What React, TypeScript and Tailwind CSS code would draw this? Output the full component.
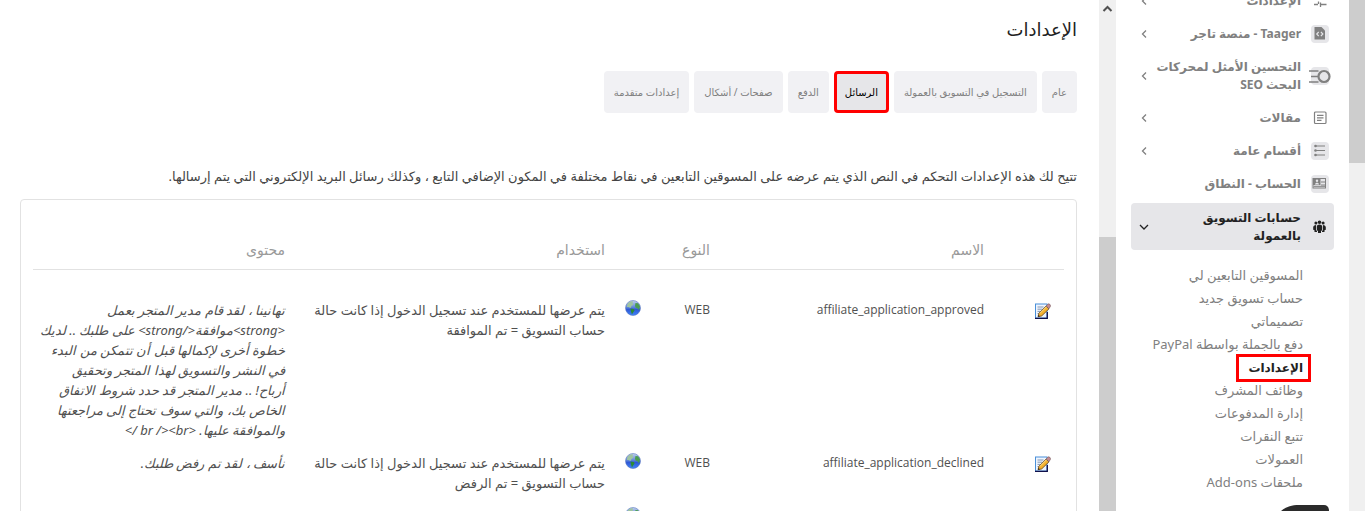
import type { ReactNode } from "react";
import clsx from "clsx";

type MenuItem = {
  lines: string[];
  icon: ReactNode;
  boxed?: boolean;
  expandable?: boolean;
  active?: boolean;
};

function SlidersIcon() {
  return (
    <svg viewBox="0 0 16 16" className="size-4" fill="none" stroke="currentColor" strokeWidth="1.3">
      <path d="M2 4h7M11 2v4M11 4h3M2 11.500h4M6.500 8.500v2.500M8.500 9.500v4.500M8.500 11.500h6" />
    </svg>
  );
}

function CodeFileIcon() {
  return (
    <svg viewBox="0 0 16 16" className="size-4">
      <path d="M2.500 1h7L13 4.500V13.500H2.500z" fill="currentColor" />
      <path d="M6.700 6 4.700 8l2 2M8.900 6l2 2-2 2" fill="none" stroke="#e6e6e9" strokeWidth="1.100" />
    </svg>
  );
}

function SeoIcon() {
  return (
    <svg viewBox="0 0 22 16" className="h-4 w-[22px] shrink-0" fill="none" stroke="currentColor">
      <circle cx="15" cy="8.500" r="5.500" strokeWidth="2.200" />
      <path d="M0 3h9.500M2 8.500h8M0 14h9.500" strokeWidth="1.500" />
    </svg>
  );
}

function ArticleIcon() {
  return (
    <svg viewBox="0 0 16 16" className="size-4" fill="none" stroke="currentColor" strokeWidth="1.200">
      <rect x="2.500" y="2" width="11.500" height="11.500" rx="1" />
      <path d="M5 5.300h6.500M5 7.800h6.500M5 10.300h4.500" />
    </svg>
  );
}

function ListIcon() {
  return (
    <svg viewBox="0 0 16 16" className="size-4" fill="currentColor">
      <circle cx="3.500" cy="3" r="1.300" />
      <circle cx="3.500" cy="7.500" r="1.300" />
      <circle cx="3.500" cy="12" r="1.300" />
      <path d="M4 2.500h9v1H4zM4 7h9v1H4zM4 11.500h9v1H4z" />
    </svg>
  );
}

function IdCardIcon() {
  return (
    <svg viewBox="0 0 16 16" className="size-4">
      <rect x="1" y="2.500" width="12.500" height="9.500" fill="none" stroke="currentColor" />
      <path d="M1 2.500h7.500v6.500H1z" fill="currentColor" />
      <circle cx="5" cy="4.800" r="1.200" fill="#e6e6e9" />
      <path d="M3 8.500c0-2.500 4-2.500 4 0z" fill="#e6e6e9" />
      <path d="M9 6h4.500M9 9h4.500M1.500 10.300h12" stroke="currentColor" />
    </svg>
  );
}

function GroupIcon() {
  return (
    <svg viewBox="0 0 16 16" className="size-4" fill="currentColor">
      <circle cx="7.500" cy="3.200" r="1.800" />
      <circle cx="3.900" cy="3.900" r="1.500" />
      <circle cx="11.100" cy="3.900" r="1.500" />
      <path d="M4.800 7.800C4.800 4.800 10.200 4.800 10.200 7.800V11.200L9 12V14H6V12L4.800 11.200z" />
      <path d="M4.100 5.900C2.300 5.900 1.200 7 1.200 8.200v2.500l1.300.6v1.700H5v-1.200l-1-.6zM10.900 5.900c1.800 0 2.900 1.100 2.900 2.300v2.500l-1.300.6v1.700H10v-1.200l1-.6z" />
    </svg>
  );
}

function EditIcon() {
  return (
    <svg viewBox="0 0 16 16" className="size-4">
      <rect x=".5" y="1" width="11.500" height="14" fill="#eef5ff" stroke="#4a90d9" />
      <path d="M0 15.300h12.300V9" fill="none" stroke="#10104a" strokeWidth="1.300" />
      <path d="M2.500 4h6M2.500 6.200h5M2.500 8.400h3M2.500 10.600h2" stroke="#8796ad" />
      <path d="m3 13.700 1-3.500L11.200 3l2.800 2.800-7.300 7.100z" fill="#f5b22e" stroke="#5c3b12" strokeWidth=".8" />
      <path d="M4.800 10.500 11.700 3.600" stroke="#ffe08a" />
      <path d="m11.200 3 1.800-2c1-.8 3 1 2.400 2.200L14 5.800z" fill="#c78c92" stroke="#70565a" strokeWidth=".6" />
      <path d="m3 13.700.5-1.800 1.300 1.300z" fill="#222" />
    </svg>
  );
}

function GlobeIcon() {
  return (
    <svg viewBox="0 0 16 16" className="size-4">
      <defs>
        <linearGradient id="sea" x1="0" y1="0" x2="0" y2="1">
          <stop offset="0" stopColor="#c3d2ee" />
          <stop offset=".45" stopColor="#5f86d8" />
          <stop offset=".6" stopColor="#2f58d6" />
          <stop offset="1" stopColor="#3f86f8" />
        </linearGradient>
      </defs>
      <circle cx="8" cy="8" r="7.500" fill="url(#sea)" stroke="#5b78c0" strokeWidth=".6" />
      <path d="M2.500 4C4 1.800 6 1.200 8 1.300L7.500 3l1 1.500-2 1.500-1 2L3.500 7 1.800 7z" fill="#9fc4a0" />
      <path d="M5.500 8.500 9 9l.5 1.500L7.800 13l-.8 1.500L6 11.500z" fill="#2c8b35" />
      <path d="m10.500 3 2.500.3 2 3-1 4-1.500-2-2-.8-.5-2z" fill="#4a9d50" />
    </svg>
  );
}

function Chevron({ down }: { down?: boolean }) {
  return (
    <svg viewBox="0 0 10 10" className="size-2.5 shrink-0" fill="none" stroke="currentColor" strokeWidth="1.300">
      <path d={down ? "M1 3l4 4 4-4" : "M7 1.500 3.500 5 7 8.500"} />
    </svg>
  );
}

const menu: MenuItem[] = [
  { lines: ["الإعدادات"], icon: <SlidersIcon />, expandable: true },
  { lines: ["Taager - منصة تاجر"], icon: <CodeFileIcon />, boxed: true, expandable: true },
  { lines: ["التحسين الأمثل لمحركات", "البحث SEO"], icon: <SeoIcon />, boxed: true, expandable: true },
  { lines: ["مقالات"], icon: <ArticleIcon />, expandable: true },
  { lines: ["أقسام عامة"], icon: <ListIcon />, boxed: true, expandable: true },
  { lines: ["الحساب - النطاق"], icon: <IdCardIcon />, boxed: true },
  { lines: ["حسابات التسويق", "بالعمولة"], icon: <GroupIcon />, expandable: true, active: true },
];

const submenu = [
  "المسوقين التابعين لي",
  "حساب تسويق جديد",
  "تصميماتي",
  "دفع بالجملة بواسطة PayPal",
  "الإعدادات",
  "وظائف المشرف",
  "إدارة المدفوعات",
  "تتبع النقرات",
  "العمولات",
  "ملحقات Add-ons",
];

const tabs = [
  "عام",
  "التسجيل في التسويق بالعمولة",
  "الرسائل",
  "الدفع",
  "صفحات / أشكال",
  "إعدادات متقدمة",
];

const messages = [
  {
    name: "affiliate_application_approved",
    type: "WEB",
    usage: ["يتم عرضها للمستخدم عند تسجيل الدخول إذا كانت حالة", "حساب التسويق = تم الموافقة"],
    content: [
      "تهانينا ، لقد قام مدير المتجر بعمل",
      "<strong>موافقة</strong> على طلبك .. لديك",
      "خطوة أخرى لإكمالها قبل أن تتمكن من البدء",
      "في النشر والتسويق لهذا المتجر وتحقيق",
      "أرباح! .. مدير المتجر قد حدد شروط الاتفاق",
      "الخاص بك، والتي سوف تحتاج إلى مراجعتها",
      "والموافقة عليها. <br /><br />",
    ],
  },
  {
    name: "affiliate_application_declined",
    type: "WEB",
    usage: ["يتم عرضها للمستخدم عند تسجيل الدخول إذا كانت حالة", "حساب التسويق = تم الرفض"],
    content: ["نأسف ، لقد تم رفض طلبك."],
  },
];

function Lines({ lines }: { lines: string[] }) {
  return lines.map((line) => (
    <span key={line} className="block whitespace-nowrap">
      {line}
    </span>
  ));
}

function Sidebar() {
  return (
    <aside className="relative w-[233px] shrink-0 overflow-hidden px-[15px]">
      <nav className="-mt-[15px]">
        <div className="flex flex-col gap-px">
          {menu.map((item, i) => (
            <button
              key={i}
              type="button"
              className={clsx(
                "flex w-full items-center rounded pr-[5px] pl-2 text-right text-[12px] leading-[18px] font-bold",
                item.active ? "mt-0.5 bg-[#e6e6e9] pt-1.5 pb-[5px] text-[#222]" : "py-[7px] text-[#808080]",
              )}
            >
              <span
                className={clsx(
                  "flex size-[18px] shrink-0 items-center justify-center rounded",
                  item.boxed && "bg-[#e6e6e9]",
                )}
              >
                {item.icon}
              </span>
              <span className="mr-2.5 grow">
                <Lines lines={item.lines} />
              </span>
              {item.expandable && <Chevron down={item.active} />}
            </button>
          ))}
        </div>

        <ul className="mt-3.5 pr-[31px] text-[13px] leading-[23px] text-[#808080]">
          {submenu.map((label) => {
            const current = label === "الإعدادات";
            return (
              <li key={label} className="relative whitespace-nowrap">
                <a href="#" className={clsx("block", current && "text-[12px] leading-[23px] font-bold text-[#222]")}>
                  {label}
                </a>
                {current && (
                  <span className="absolute -top-0.5 -right-2 h-7 w-[75px] border-3 border-[#ff0000]" />
                )}
              </li>
            );
          })}
        </ul>
      </nav>
      <svg viewBox="0 0 48 6" className="absolute right-5 bottom-0 h-1.5 w-12">
        <path d="M0 6C5 2 10 0 18 0h25c3 0 5 2 5 6z" fill="#2b2b2b" />
      </svg>
    </aside>
  );
}

function Messages() {
  return (
    <div className="mt-[13px] h-[600px] rounded border border-[#e2e2e2] px-3">
      <table className="w-full table-fixed text-right text-[13px] leading-5 text-[#505050]">
        <thead className="text-[14px] leading-5 text-[#999]">
          <tr className="border-b border-[#e2e2e2]">
            <th className="w-[72px]" />
            <th className="px-2 pt-10 pb-[9px] font-normal">الاسم</th>
            <th className="w-[69px] px-2 pt-10 pb-[9px] font-normal">النوع</th>
            <th className="w-9" />
            <th className="w-[320px] px-2 pt-10 pb-[9px] font-normal">استخدام</th>
            <th className="w-[260px] px-2 pt-10 pb-[9px] font-normal">محتوى</th>
          </tr>
        </thead>
        <tbody className="align-top">
          <tr className="h-[23px]" />
          {messages.map((message) => (
            <tr key={message.name}>
              <td className="pt-2.5 pr-[13px]">
                <button type="button" aria-label="تعديل" className="block">
                  <EditIcon />
                </button>
              </td>
              <td className="px-2 pt-[7px] font-['Open_Sans','Noto_Sans',sans-serif] text-[12px] leading-5">
                {message.name}
              </td>
              <td className="px-2 pt-[7px] font-['Open_Sans','Noto_Sans',sans-serif] text-[12px] leading-5">
                {message.type}
              </td>
              <td className="pt-[7px] pr-2">
                <GlobeIcon />
              </td>
              <td className="px-2 pt-[7px] pb-1.5">
                <Lines lines={message.usage} />
              </td>
              <td className="px-2 pt-[7px] pb-1.5 italic">
                <Lines lines={message.content} />
              </td>
            </tr>
          ))}
          <tr>
            <td />
            <td />
            <td />
            <td className="pt-2 pr-2">
              <GlobeIcon />
            </td>
            <td />
            <td />
          </tr>
        </tbody>
      </table>
    </div>
  );
}

export default function App() {
  return (
    <div
      dir="rtl"
      className="flex h-screen overflow-hidden bg-white font-['Noto_Sans','DejaVu_Sans',sans-serif]"
    >
      <div className="w-4 shrink-0 bg-[#f0f0f0]">
        <div className="h-[163px] bg-[#cdcdcd]" />
      </div>

      <Sidebar />

      <div className="flex w-[17px] shrink-0 flex-col bg-[#f0f0f0]">
        <svg viewBox="0 0 17 17" className="size-[17px]" fill="none" stroke="#505050" strokeWidth="2">
          <path d="M4.500 11 8.500 7l4 4" />
        </svg>
        <div className="mt-[220px] grow bg-[#cdcdcd]" />
      </div>

      <main className="min-w-0 grow overflow-hidden pr-[22px] pl-5">
        <h1 className="pt-[15px] text-[18px] leading-7 text-[#222]">الإعدادات</h1>
        <div className="mt-7 flex gap-[5px]">
          {tabs.map((tab) => {
            const current = tab === "الرسائل";
            return (
              <button
                key={tab}
                type="button"
                className={clsx(
                  "h-[42px] rounded text-[10px] whitespace-nowrap",
                  current
                    ? "border-3 border-[#ff0000] bg-[#e6e6e9] px-2 text-black"
                    : "bg-[#f1f1f4] px-2.5 text-[#808080]",
                )}
              >
                {tab}
              </button>
            );
          })}
        </div>
        <p className="mt-[53px] text-[13px] leading-5 whitespace-nowrap text-[#444]">
          تتيح لك هذه الإعدادات التحكم في النص الذي يتم عرضه على المسوقين التابعين في نقاط مختلفة في المكون الإضافي التابع ، وكذلك رسائل البريد الإلكتروني التي يتم إرسالها.
        </p>
        <Messages />
      </main>
    </div>
  );
}
